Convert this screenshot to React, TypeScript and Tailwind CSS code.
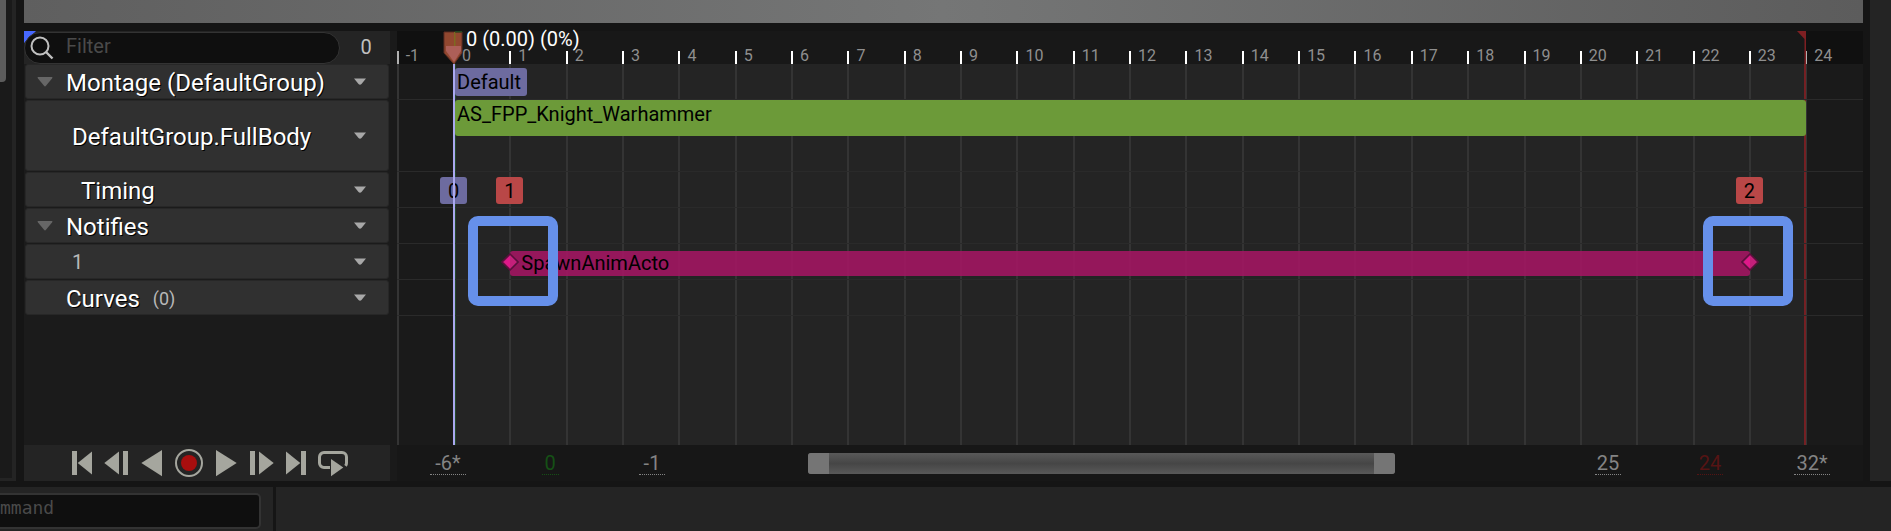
import React from "react";

const FIRST_FRAME = -1.012;
const VISIBLE_FRAMES = 26.02;

const at = (frame: number) => `${((frame - FIRST_FRAME) / VISIBLE_FRAMES) * 100}%`;
const span = (frames: number) => `${(frames / VISIBLE_FRAMES) * 100}%`;

const frames = Array.from({ length: 26 }, (_, i) => i - 1);

function MenuArrow({ label }: { label: string }) {
  return (
    <button type="button" aria-label={label} className="flex h-6 w-6 shrink-0 items-center justify-center">
      <svg width="12" height="8" viewBox="0 0 12 8">
        <path d="M0 0.5 H12 L7.5 6 Q6 7.5 4.5 6 Z" fill="#a8a8a8" />
      </svg>
    </button>
  );
}

type TrackProps = {
  label: string;
  tall?: boolean;
  expandable?: boolean;
  indent: string;
  plain?: boolean;
  count?: string;
};

function Track({ label, tall, expandable, indent, plain, count }: TrackProps) {
  return (
    <div className={`px-px pb-px ${tall ? "h-[72px]" : "h-9"}`}>
      <div className="flex h-full items-center rounded-[3px] border border-[#272727] bg-[#303030] pr-4">
        <div className={`flex shrink-0 items-center pl-[11px] ${indent}`}>
          {expandable && (
            <button type="button" aria-label={`Collapse ${label}`}>
              <svg width="16" height="10" viewBox="0 0 16 10">
                <path d="M1 0 H15 Q16 0 15 1.5 L9 8.8 Q8 10 7 8.8 L1 1.5 Q0 0 1 0 Z" fill="#666666" />
              </svg>
            </button>
          )}
        </div>
        <div className={`flex flex-1 items-center gap-[13px] whitespace-nowrap ${plain ? "" : "pt-[2px]"}`}>
          <span
            className={
              plain
                ? "text-[20px] leading-6 text-[#b8b8b8]"
                : "text-[24px] leading-7 text-white [text-shadow:1px_1px_0_#000]"
            }
          >
            {label}
          </span>
          {count && <span className="text-[18px] leading-6 text-[#b8b8b8]">{count}</span>}
        </div>
        <MenuArrow label={`${label} options`} />
      </div>
    </div>
  );
}

const transport: { name: string; art: React.ReactNode }[] = [
  {
    name: "To front",
    art: (
      <>
        <path d="M9 6 H14 V30 H9 Z" />
        <path d="M14.7 18 L29 6.5 V29.5 Z" />
      </>
    ),
  },
  {
    name: "Step back",
    art: (
      <>
        <path d="M5.3 18 L20 6.5 V29.5 Z" />
        <path d="M24 6 H29 V30 H24 Z" />
      </>
    ),
  },
  { name: "Play reverse", art: <path d="M6.3 18 L27 5 V31.3 Z" /> },
  {
    name: "Record",
    art: (
      <>
        <circle cx="18" cy="18" r="13" fill="none" stroke="#a5a69e" strokeWidth="2" />
        <circle cx="18" cy="18" r="8" fill="#a80e0e" />
      </>
    ),
  },
  { name: "Play", art: <path d="M29.7 18 L9 5 V31.3 Z" /> },
  {
    name: "Step forward",
    art: (
      <>
        <path d="M7 6 H12 V30 H7 Z" />
        <path d="M30.7 18 L16 6.5 V29.5 Z" />
      </>
    ),
  },
  {
    name: "To end",
    art: (
      <>
        <path d="M21.3 18 L7 6.5 V29.5 Z" />
        <path d="M22 6 H27 V30 H22 Z" />
      </>
    ),
  },
  {
    name: "Loop",
    art: (
      <>
        <path
          d="M15 22.5 H9 A4.5 4.5 0 0 1 4.5 18 V12 A4.5 4.5 0 0 1 9 7.5 H27 A4.5 4.5 0 0 1 31.5 12 V18 Q31.5 19.5 30.5 20.8"
          fill="none"
          stroke="#a5a69e"
          strokeWidth="3"
        />
        <path d="M16 14 L28.3 22.5 L16 31.3 Z" />
      </>
    ),
  },
];

function TrackPanel() {
  return (
    <section className="flex w-[366px] shrink-0 flex-col bg-[#1b1b1b]">
      <div className="relative flex h-[33px] items-center bg-[#242424]">
        <svg className="absolute left-0 top-0" width="12" height="12" viewBox="0 0 12 12">
          <path d="M0 0 H12 L0 12 Z" fill="#4768ff" />
        </svg>
        <label className="relative flex h-8 w-[316px] items-center gap-3 rounded-full border border-[#333333] bg-[#0f0f0f] pl-[5px]">
          <svg width="24" height="24" viewBox="0 0 24 24" fill="none" stroke="#c0c0c0" strokeWidth="2">
            <circle cx="10" cy="10" r="8.5" />
            <path d="M16 16 L22.5 22.5" strokeWidth="2.4" />
          </svg>
          <input
            type="text"
            aria-label="Filter"
            placeholder="Filter"
            className="h-6 w-60 bg-transparent pb-1 text-[20px] leading-5 text-[#c0c0c0] outline-none placeholder:text-[#4a4a4a]"
          />
        </label>
        <span className="flex-1 pb-px pl-[2px] text-center text-[20px] leading-6 text-[#c0c0c0]">0</span>
      </div>
      <div className="flex-1">
        <Track label="Montage (DefaultGroup)" expandable indent="w-10" />
        <Track label="DefaultGroup.FullBody" tall indent="w-[46px]" />
        <Track label="Timing" indent="w-[55px]" />
        <Track label="Notifies" expandable indent="w-10" />
        <Track label="1" plain indent="w-[46px]" />
        <Track label="Curves" count="(0)" indent="w-10" />
      </div>
      <div className="flex h-9 justify-center bg-[#242424]">
        {transport.map((b) => (
          <button key={b.name} type="button" aria-label={b.name} className="h-9 w-9">
            <svg width="36" height="36" viewBox="0 0 36 36" fill="#a5a69e">
              {b.art}
            </svg>
          </button>
        ))}
      </div>
    </section>
  );
}

function Ruler() {
  return (
    <div className="relative h-[33px] bg-[#181818]">
      <div className="absolute inset-y-0 left-0 bg-[#101010]" style={{ width: at(0) }} />
      <div className="absolute inset-y-0 right-0 bg-[#101010]" style={{ left: at(24) }} />
      {frames.map((f) => (
        <div key={f} className="absolute bottom-0 -ml-px flex h-[13px] items-end" style={{ left: at(f) }}>
          <span className={`h-full w-[2px] ${f < 0 || f > 23 ? "bg-[#b0b0b0]" : "bg-white"}`} />
          <span className="pl-[7px] text-[16px] leading-4 text-[#8f8f8f]">{f}</span>
        </div>
      ))}
      <svg
        className="absolute top-0 -ml-[9px]"
        style={{ left: at(24) }}
        width="9"
        height="33"
        viewBox="0 0 9 33"
        fill="#7e1f22"
      >
        <path d="M0 0 H9 V33 H7.5 V8 Z" />
      </svg>
      <div className="absolute top-0 -ml-[11px] flex" style={{ left: at(0) }}>
        <svg width="20" height="33" viewBox="0 0 20 33">
          <path d="M1 1 H19 V22 L11 33 L1 22 Z" fill="#91472f" stroke="#5f2c22" strokeWidth="1" />
          <path d="M11 1 H12.5 V15 H11 Z" fill="#7d6a20" />
          <path d="M12 0 H19 V1.5 H12 Z" fill="#24461f" />
          <path d="M3 15 H18 V20 L11 31 L3 20 Z" fill="#ad5f58" />
        </svg>
        <span className="whitespace-nowrap pl-[3px] text-[20px] leading-4 text-white">0 (0.00) (0%)</span>
      </div>
    </div>
  );
}

function Badge({ frame, text, color }: { frame: number; text: string; color: string }) {
  return (
    <div
      className={`absolute top-[5px] -ml-[14px] flex h-[27px] w-[27px] items-center justify-center rounded-[3px] text-[20px] leading-6 text-black ${color}`}
      style={{ left: at(frame) }}
    >
      {text}
    </div>
  );
}

function Diamond({ frame }: { frame: number }) {
  return (
    <svg className="absolute top-[9px] -ml-[9px]" style={{ left: at(frame) }} width="18" height="18" viewBox="0 0 18 18">
      <path d="M9 1 L17 9 L9 17 L1 9 Z" fill="#c4207a" stroke="#5a0f3c" strokeWidth="1.6" />
      <path d="M9 3 V15 L3 9 Z" fill="#e0188a" />
    </svg>
  );
}

function Highlight({ frame }: { frame: number }) {
  return (
    <div
      className="absolute -top-7 -ml-[45px] h-[90px] w-[90px] rounded-[10px] border-[10px] border-[#6690ea]"
      style={{ left: at(frame) }}
    />
  );
}

const lane = "relative h-9 border-b border-[#2a2a2a]";

function Lanes() {
  return (
    <div className="relative flex-1 bg-[#242424]">
      <div className="absolute inset-y-0 left-0 bg-[#1a1a1a]" style={{ width: at(0) }} />
      <div className="absolute inset-y-0 right-0 bg-[#1a1a1a]" style={{ left: at(24) }} />
      {frames.map((f) => (
        <div key={f} className="absolute inset-y-0 -ml-px w-[2px] bg-[#343434]" style={{ left: at(f) }} />
      ))}
      <div className="absolute inset-y-0 ml-px w-px bg-[#23482a]" style={{ left: at(0) }} />
      <div className="absolute inset-y-0 -ml-[2px] w-[2px] bg-[#742023]" style={{ left: at(24) }} />
      <div className={lane}>
        <div
          className="absolute top-1 ml-px h-7 rounded-[3px] bg-[#6d6b9f] pl-[2px] pr-[6px] text-[20px] leading-7 text-black"
          style={{ left: at(0) }}
        >
          Default
        </div>
      </div>
      <div className="relative h-[72px] border-b border-[#2a2a2a]">
        <div
          className="absolute top-0 ml-px h-9 rounded-[3px] bg-[#6c9a39] pl-[2px] text-[20px] leading-7 text-black"
          style={{ left: at(0), width: span(23.98) }}
        >
          AS_FPP_Knight_Warhammer
        </div>
      </div>
      <div className={lane}>
        <Badge frame={0} text="0" color="bg-[#6d6b9f]" />
        <Badge frame={1} text="1" color="bg-[#b94747]" />
        <Badge frame={23} text="2" color="bg-[#b94747]" />
      </div>
      <div className={lane} />
      <div className={lane}>
        <div
          className="absolute top-[7px] h-[25px] rounded-[3px] bg-[#a91565]/85 pl-[11px] text-[20px] leading-6 text-black"
          style={{ left: at(1), width: span(22) }}
        >
          SpawnAnimActo
        </div>
        <Diamond frame={1} />
        <Diamond frame={23} />
        <Highlight frame={1.05} />
        <Highlight frame={22.97} />
      </div>
      <div className={lane} />
      <div className="absolute inset-y-0 -ml-px w-[2px] bg-[#aaa8f0]" style={{ left: at(0) }} />
    </div>
  );
}

function RangeValue({ label, value, width, color }: { label: string; value: string; width: string; color: string }) {
  return (
    <div className="flex w-[102px] justify-center">
      <input
        type="text"
        aria-label={label}
        defaultValue={value}
        className={`h-[23px] border-b border-dotted border-current bg-transparent text-center text-[20px] leading-5 outline-none ${width} ${color}`}
      />
    </div>
  );
}

function RangeBar() {
  return (
    <div className="flex h-9 items-center bg-[#171717]">
      <RangeValue label="Working range start" value="-6*" width="w-9" color="text-[#848484]" />
      <RangeValue label="Playback start" value="0" width="w-[17px]" color="text-[#155015]" />
      <RangeValue label="View range start" value="-1" width="w-[26px]" color="text-[#848484]" />
      <div className="flex-1">
        <div className="ml-[12.3%] flex h-[21px] w-[68.7%] overflow-hidden rounded-[3px] bg-linear-to-b from-[#595959] via-[#464646] to-[#595959]">
          <button type="button" aria-label="Drag view start" className="w-[21px] bg-[#757575]" />
          <button type="button" aria-label="Pan view" className="flex-1" />
          <button type="button" aria-label="Drag view end" className="w-[21px] bg-[#757575]" />
        </div>
      </div>
      <RangeValue label="View range end" value="25" width="w-[26px]" color="text-[#848484]" />
      <RangeValue label="Playback end" value="24" width="w-[26px]" color="text-[#551414]" />
      <RangeValue label="Working range end" value="32*" width="w-9" color="text-[#848484]" />
    </div>
  );
}

export default function App() {
  return (
    <div className="flex min-h-screen flex-col gap-[6px] overflow-hidden bg-[#151515] font-[Roboto,sans-serif]">
      <div className="flex flex-1">
        <aside className="mr-2 w-4 shrink-0 border-b-[3px] border-r-4 border-[#242424] bg-[#1a1a1a]">
          <div className="h-[82px] w-[6px] rounded-br-[4px] bg-[#5c5c5c]" />
        </aside>
        <main className="flex min-w-0 flex-1 flex-col">
          <div className="mb-2 h-[23px] bg-linear-to-r from-[#5f5f5f] via-[#757676] to-[#5c5c5c]" />
          <div className="flex flex-1">
            <TrackPanel />
            <div className="w-[7px] shrink-0 bg-[#1a1a1a]" />
            <section className="flex min-w-0 flex-1 flex-col">
              <Ruler />
              <Lanes />
              <RangeBar />
            </section>
          </div>
        </main>
        <aside className="ml-[7px] w-[21px] shrink-0 bg-[#242424]" />
      </div>
      <footer className="flex h-11 bg-[#242424]">
        <div className="flex w-[273px] items-start pt-[6px]">
          <input
            type="text"
            aria-label="Console command"
            placeholder="mmand"
            className="h-9 w-[261px] rounded-r-[5px] border-y-2 border-r-2 border-[#333333] bg-[#0f0f0f] pb-2 font-['DejaVu_Sans_Mono',monospace] text-[18px] text-[#c0c0c0] outline-none placeholder:text-[#4a4a4a]"
          />
        </div>
        <div className="w-[3px] bg-[#151515]" />
      </footer>
    </div>
  );
}
